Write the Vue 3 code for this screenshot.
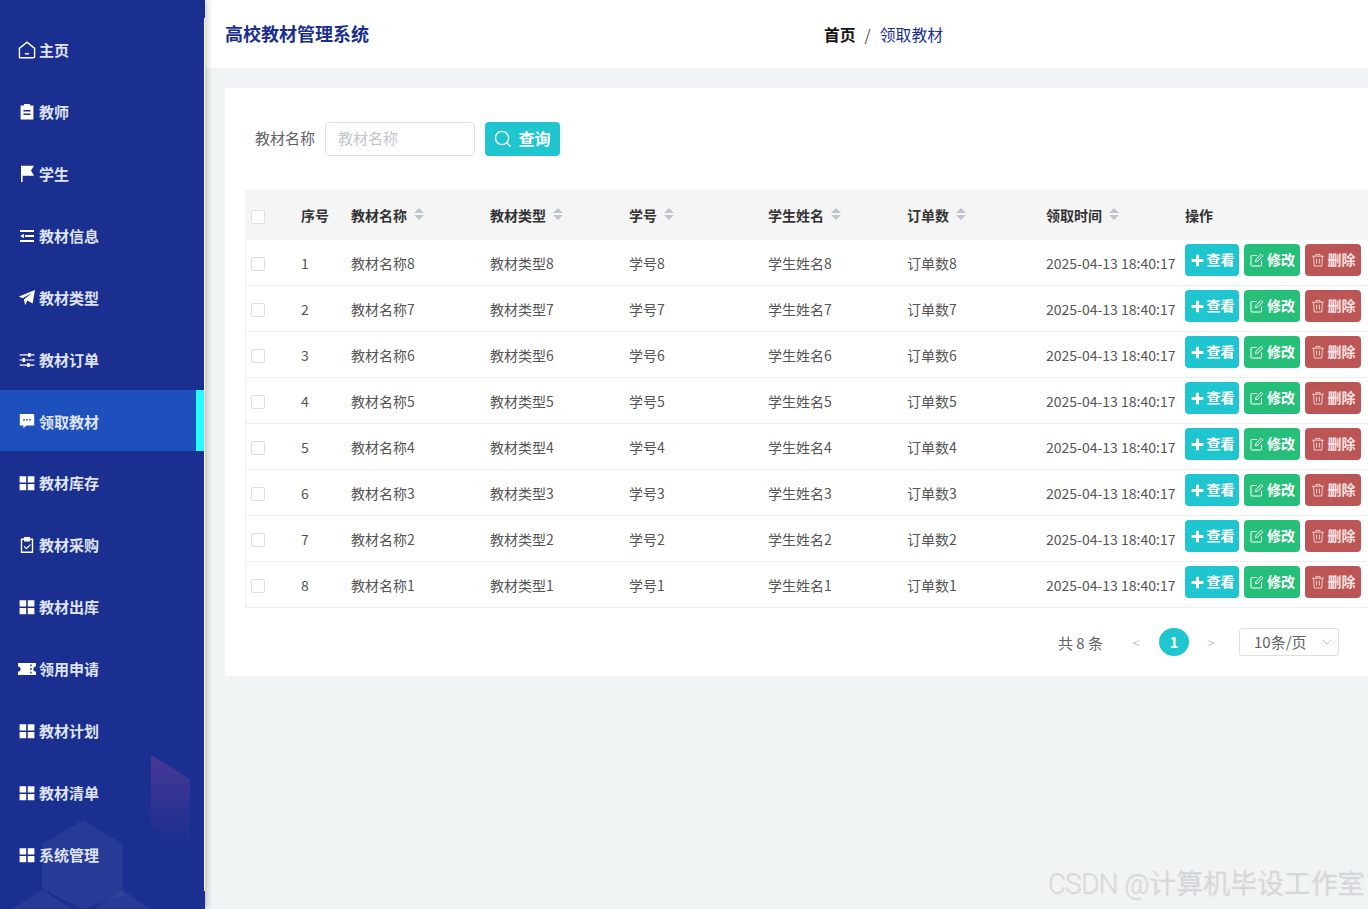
<script setup>
const I = {
  home: { s: 'M1.4 7.4 9 1.2l7.6 6.2v8.4a1 1 0 0 1-1 1H2.4a1 1 0 0 1-1-1zM7 12.4c1.2.7 2.8.7 4 0' },
  order: { f: 'M6 1h6v1.6h3.4V16.6H2.6V2.6H6zM5.5 7v1.5h7V7zm0 3.6v1.5h7v-1.5z' },
  flag: { f: 'M3 .8h13L13 5.6l3 5.2H4.6V17H3z' },
  fold: { f: 'M2 3h14v2H2zM7 8h9v2H7zM2 13h14v2H2zM2.2 9 5.8 6.8v4.4z' },
  plane: { f: 'M17 1 14.6 14.4 9.4 11.4 7.2 16.2 5.9 10.5 14 4 4.6 9.3.9 7.4z' },
  sliders: { f: 'M1.6 3.3h8.6V2h2.4v1.3h3.8v1.3h-3.8v1.3h-2.4V4.6H1.6zM1.6 8.4h3V7.1H7v1.3h9.4v1.2H7v1.3H4.6V9.6h-3zM1.6 13.4h7.6v-1.3h2.4v1.3h4.8v1.3h-4.8V16H9.2v-1.3H1.6z' },
  comment: { f: 'M1.8 2h14.4v11.4H8.4l-3 2.8v-2.8H1.8zM5.2 7v1.6h1.6V7zm3 0v1.6h1.6V7zm3 0v1.6h1.6V7z' },
  grid: { f: 'M1.6 2.2h6.6v6.2H1.6zM9.8 2.2h6.6v6.2H9.8zM1.6 10h6.6v6.2H1.6zM9.8 10h6.6v6.2H9.8z' },
  claim: { f: 'M6 1h6v1.6h3.2V17H2.8V2.6H6zM4.2 4v11.6h9.6V4H12v1.6H6V4zm7.9 4.2.8.8-4.5 4.4-2.7-2.6.8-.8 1.9 1.8z' },
  ticket: { f: 'M0 3h18v3.4a2.6 2.6 0 0 0 0 5.2V15H0v-3.4a2.6 2.6 0 0 0 0-5.2zm12.2 1.4v1.8h1.4V4.4zm0 3.7v1.8h1.4V8.100zm0 3.700v1.800h1.400v-1.800z' },
}
const menu = [
  ['主页', 'home'], ['教师', 'order'], ['学生', 'flag'], ['教材信息', 'fold'], ['教材类型', 'plane'],
  ['教材订单', 'sliders'], ['领取教材', 'comment'], ['教材库存', 'grid'], ['教材采购', 'claim'], ['教材出库', 'grid'],
  ['领用申请', 'ticket'], ['教材计划', 'grid'], ['教材清单', 'grid'], ['系统管理', 'grid'],
].map(([label, icon]) => ({ label, icon: I[icon] }))
const cols = ['教材名称', '教材类型', '学号', '学生姓名', '订单数', '领取时间']
const rows = [8, 7, 6, 5, 4, 3, 2, 1].map((n, i) => ({
  idx: i + 1,
  cells: ['教材名称' + n, '教材类型' + n, '学号' + n, '学生姓名' + n, '订单数' + n, '2025-04-13 18:40:17'],
}))
</script>

<template>
  <div class="page">
    <aside class="side">
      <svg class="deco" width="205" height="170" viewBox="0 0 205 170">
        <defs>
          <linearGradient id="pg" x1="0" y1="0" x2="0" y2="1">
            <stop offset="0" stop-color="#5a3a96" stop-opacity=".75" />
            <stop offset="1" stop-color="#4a3a96" stop-opacity="0" />
          </linearGradient>
        </defs>
        <path d="M151 16 190 40V110L151 88z" fill="url(#pg)" />
        <path d="M83 81 123 105V157L83 170 42 150V105z" fill="#fff" opacity=".055" />
        <path d="M12 170 42 151 72 170zM95 170 123 151 150 170z" fill="#fff" opacity=".055" />
      </svg>
      <div v-for="m in menu" :key="m.label" class="item" :class="{ on: m.label === '领取教材' }">
        <svg class="ico" width="18" height="18" viewBox="0 0 18 18">
          <path v-if="m.icon.f" :d="m.icon.f" fill="#fff" fill-rule="evenodd" />
          <path v-else :d="m.icon.s" fill="none" stroke="#fff" stroke-width="1.4" />
        </svg>
        <span>{{ m.label }}</span>
      </div>
      <i class="edge"></i>
    </aside>

    <div class="main">
      <header class="top">
        <h1 class="title">高校教材管理系统</h1>
        <div class="crumb">
          <b>首页</b><span class="sep">/</span><span class="cur">领取教材</span>
        </div>
      </header>

      <section class="card">
        <div class="search">
          <label>教材名称</label>
          <div class="input">教材名称</div>
          <button class="query">
            <svg width="18" height="18" viewBox="0 0 18 18" fill="none" stroke="#fff" stroke-width="1.4">
              <circle cx="8" cy="8" r="6.6" /><path d="m12.8 12.8 3.6 3.6" />
            </svg>
            <span>查询</span>
          </button>
        </div>

        <div class="table">
          <div class="row head">
            <div class="cell"><i class="check hc"></i></div>
            <div class="cell">序号</div>
            <div v-for="c in cols" :key="c" class="cell">
              {{ c }}<span class="sort"><i class="up"></i><i class="dn"></i></span>
            </div>
            <div class="cell">操作</div>
          </div>
          <div v-for="r in rows" :key="r.idx" class="row body">
            <div class="cell"><i class="check bc"></i></div>
            <div class="cell">{{ r.idx }}</div>
            <div v-for="(c, i) in r.cells" :key="i" class="cell">{{ c }}</div>
            <div class="cell ops">
              <button class="btn view">
                <svg width="13" height="13" viewBox="0 0 12 12"><path d="M4.600 .6h2.800v4h4v2.800h-4v4H4.600v-4h-4V4.600h4z" fill="#fff" /></svg><span>查看</span>
              </button>
              <button class="btn edit">
                <svg width="14" height="14" viewBox="0 0 14 14" fill="none" stroke="#fff" stroke-width="1"><path d="M11.5 7.500v4.800a.7.7 0 0 1-.7.7H1.700a.7.7 0 0 1-.7-.7V3.200a.7.7 0 0 1 .7-.7h5.300M5.500 8.700 6 6.500 11.200 1.200l1.700 1.700L7.700 8.200z" /></svg><span>修改</span>
              </button>
              <button class="btn del">
                <svg width="14" height="14" viewBox="0 0 14 14" fill="none" stroke="#f3cdcd" stroke-width="1"><path d="M1 3.200h12M5 3V1.400h4V3M2.600 3.400l.6 9.600h7.600l.6-9.600M5.600 5.600v5M8.400 5.600v5" /></svg><span>删除</span>
              </button>
            </div>
          </div>
        </div>

        <div class="pager">
          <span class="total">共 8 条</span>
          <span class="arrow">&lt;</span>
          <span class="num">1</span>
          <span class="arrow">&gt;</span>
          <div class="size">
            <span>10条/页</span>
            <svg width="10" height="6" viewBox="0 0 10 6" fill="none" stroke="#c0c4cc"><path d="m.5.5 4.500 4.500L9.500.5" /></svg>
          </div>
        </div>
      </section>

      <div class="mark">CSDN @计算机毕设工作室</div>
    </div>
  </div>
</template>

<style>
html, body { margin: 0; overflow: hidden; }
</style>

<style scoped>
.page {
  display: flex;
  width: 1368px;
  height: 909px;
  overflow: hidden;
  background: #f1f4f5;
  font-family: "Noto Sans CJK SC", "Noto Sans", sans-serif;
  font-size: 14px;
  color: #606266;
}
.side {
  position: relative;
  z-index: 2;
  flex: none;
  box-sizing: border-box;
  width: 205px;
  padding-top: 18.4px;
  background: #1a2f90;
  box-shadow: 2px 0 6px rgba(0, 0, 0, .22);
}
.deco { position: absolute; left: 0; bottom: 0; }
.edge { position: absolute; right: 0; top: 18px; bottom: 18px; width: 1px; background: #fff; }
.item {
  position: relative;
  box-sizing: border-box;
  display: flex;
  align-items: center;
  gap: 3px;
  width: 204px;
  height: 62px;
  padding: 1px 0 0 18px;
  color: #dfe3f2;
  font-size: 15px;
  font-weight: 700;
}
.item.on { height: 61px; background: #1e50bd; border-right: 8px solid #26fbff; }
.ico { flex: none; }
.main { position: relative; flex: 1; min-width: 0; }
.top {
  display: flex;
  align-items: center;
  height: 68px;
  padding-left: 20px;
  background: #fff;
}
.title {
  width: 599px;
  margin: -2px 0 0;
  color: #1a2f90;
  font-size: 18px;
  font-weight: 700;
}
.crumb { display: flex; align-items: center; font-size: 15.8px; }
.crumb b { color: #111; font-weight: 700; }
.sep { margin: 0 9px; color: #555; }
.cur { color: #1a2f90; font-size: 15.8px; }
.card {
  box-sizing: border-box;
  width: 1220px;
  height: 588px;
  margin: 20px 0 0 20px;
  padding-top: 34px;
  background: #fff;
}
.search {
  display: flex;
  align-items: center;
  height: 34px;
  padding-left: 30px;
  font-size: 15px;
}
.search label { width: 70px; margin-bottom: 3px; }
.input {
  box-sizing: border-box;
  width: 150px;
  height: 34px;
  padding-left: 12px;
  border: 1px solid #dcdfe6;
  border-radius: 4px;
  color: #c0c4cc;
  line-height: 29px;
}
.query {
  display: flex;
  align-items: center;
  justify-content: center;
  gap: 6px;
  width: 75px;
  height: 34px;
  margin-left: 10px;
  padding: 0;
  border: 0;
  border-radius: 4px;
  background: #1fc5cf;
  color: #fff;
  font: 700 16px "Noto Sans CJK SC", sans-serif;
}
.query span { margin-bottom: 2px; }
.table { margin: 34px 0 0 20px; }
.row { display: grid; grid-template-columns: 50px 50px repeat(6, 139px) 200px; }
.head { height: 50px; background: #f5f5f6; color: #333; font-weight: 700; }
.body { height: 46px; border-bottom: 1px solid #ebeef5; box-sizing: border-box; box-shadow: inset 1px 0 #ebeef5; color: #555; }
.cell {
  display: flex;
  align-items: center;
  box-sizing: border-box;
  padding-left: 6px;
  white-space: nowrap;
}
.check {
  box-sizing: border-box;
  width: 14px;
  height: 14px;
  border: 1px solid #dcdfe6;
  border-radius: 2px;
  background: #fff;
}
.hc { margin-top: 4px; }
.bc { margin-top: 2px; }
.sort { display: inline-flex; flex-direction: column; gap: 2px; margin: -3px 0 0 7px; }
.up, .dn { width: 0; height: 0; border-left: 5px solid transparent; border-right: 5px solid transparent; }
.up { border-bottom: 5px solid #c0c4cc; }
.dn { border-top: 5px solid #c0c4cc; }
.body .ops { align-items: flex-start; gap: 5px; padding-top: 4px; }
.btn {
  display: flex;
  align-items: center;
  justify-content: center;
  gap: 3px;
  width: 56px;
  height: 32px;
  padding: 0;
  border: 0;
  border-radius: 4px;
  color: #fff;
  font: 700 14px "Noto Sans CJK SC", sans-serif;
}
.btn span { margin-bottom: 2px; }
.view { width: 54px; gap: 3px; padding-left: 1px; background: #1fc5cf; }
.edit { padding-left: 1px; background: #26bf79; }
.del { background: #bc5555; }
.del span { color: #f8e3e3; }
.pager { display: flex; align-items: center; height: 30px; margin-top: 19px; padding-left: 833px; font-size: 15px; }
.total { width: 73px; }
.arrow { width: 10px; color: #c0c4cc; font-size: 13px; text-align: center; }
.num {
  width: 30px;
  height: 28px;
  margin: 0 17px 0 18px;
  border-radius: 50%;
  background: #1fc5cf;
  color: #fff;
  font-weight: 700;
  line-height: 28px;
  text-align: center;
}
.size {
  box-sizing: border-box;
  display: flex;
  align-items: center;
  justify-content: space-between;
  width: 100px;
  height: 28px;
  margin-left: 23px;
  padding: 0 6px 0 14px;
  border: 1px solid #dcdfe6;
  border-radius: 3px;
  font-size: 15px;
}
.size span { margin-bottom: 1px; }
.mark {
  position: absolute;
  right: 4px;
  bottom: 8px;
  color: #d6d9db;
  font: 200 27px Roboto, "Noto Sans CJK SC", sans-serif;
  letter-spacing: -.1px;
  text-shadow: 1px 1px 1px rgba(0, 0, 0, .14);
  white-space: nowrap;
}
</style>
